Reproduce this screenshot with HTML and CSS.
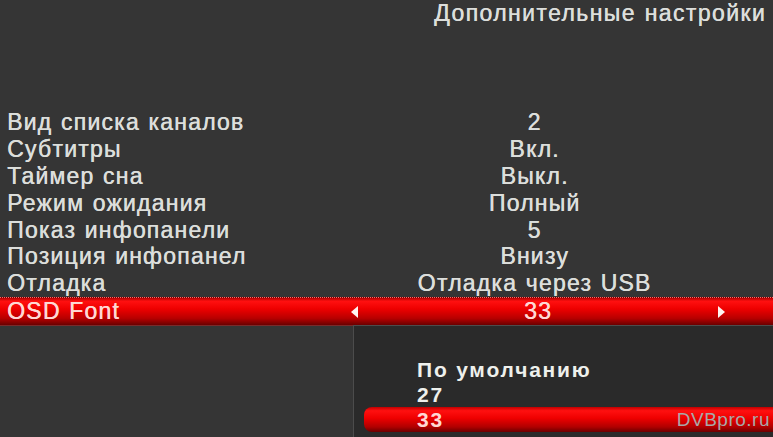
FILE: index.html
```html
<!DOCTYPE html>
<html lang="ru">
<head>
<meta charset="utf-8">
<title>Дополнительные настройки</title>
<link rel="stylesheet" href="styles.css">
</head>
<body>
<div class="screen">
  <header class="title">Дополнительные настройки</header>
  <div class="list">
    <div class="row"><span class="label">Вид списка каналов</span><span class="value">2</span></div>
    <div class="row"><span class="label">Субтитры</span><span class="value">Вкл.</span></div>
    <div class="row"><span class="label">Таймер сна</span><span class="value">Выкл.</span></div>
    <div class="row"><span class="label">Режим ожидания</span><span class="value">Полный</span></div>
    <div class="row"><span class="label">Показ инфопанели</span><span class="value">5</span></div>
    <div class="row"><span class="label">Позиция инфопанел</span><span class="value">Внизу</span></div>
    <div class="row"><span class="label">Отладка</span><span class="value">Отладка через USB</span></div>
    <div class="row selected"><span class="label">OSD Font</span><span class="value"><span class="arrow left"></span><span class="val-text">33</span><span class="arrow right"></span></span></div>
  </div>
  <div class="popup">
    <div class="opt">По умолчанию</div>
    <div class="opt">27</div>
    <div class="opt active">33</div>
  </div>
  <div class="watermark">DVBpro.ru</div>
</div>
</body>
</html>
```
FILE: styles.css
```css
html, body {
  margin: 0;
  padding: 0;
  background: #353535;
}
.screen {
  position: relative;
  width: 773px;
  height: 437px;
  overflow: hidden;
  background: #353535;
  font-family: "Liberation Sans", Arial, sans-serif;
  color: #dcdedb;
}
.title {
  text-align: right;
  padding: 0 7px 0 0;
  height: 109px;
  box-sizing: border-box;
  font-size: 23px;
  line-height: 26px;
  letter-spacing: 1.4px;
  word-spacing: 1px;
  text-shadow: 0.4px 0 0 currentColor;
}
.list {
  display: flex;
  flex-direction: column;
}
.row {
  display: grid;
  grid-template-columns: 296px 1fr;
  height: 26.9px;
  line-height: 27px;
  font-size: 23px;
  letter-spacing: 1.2px;
  word-spacing: 1px;
  text-shadow: 0.5px 0 0 currentColor;
}
.label {
  padding-left: 7px;
  white-space: nowrap;
}
.value {
  text-align: center;
  white-space: nowrap;
}
.row.selected {
  background: linear-gradient(to bottom, #b40000 0%, #ff1010 12%, #ee0000 40%, #b80000 75%, #6a0000 100%);
  border-top: 1px dotted #ff6a6a;
  border-bottom: 1px solid #7a2a2a;
  color: #ffd8d4;
}
.row.selected .value {
  display: flex;
  align-items: center;
  padding: 0 48px 0 55px;
}
.val-text {
  flex: 1;
  text-align: center;
}
.arrow {
  width: 0;
  height: 0;
  border-top: 6px solid transparent;
  border-bottom: 6px solid transparent;
}
.arrow.left {
  border-right: 7px solid #fff4f0;
}
.arrow.right {
  border-left: 7px solid #fff4f0;
}
.popup {
  position: absolute;
  left: 353px;
  top: 325px;
  right: 0;
  bottom: 0;
  background: #2a2a2a;
  border-left: 1px solid #4c4c4c;
  border-top: 1px solid #4c4c4c;
  padding-top: 31px;
  box-sizing: border-box;
  display: flex;
  flex-direction: column;
}
.opt {
  height: 25px;
  line-height: 25px;
  padding-left: 63px;
  font-size: 21px;
  font-weight: bold;
  color: #eef0ec;
  letter-spacing: 1.8px;
}
.opt.active {
  margin-left: 10px;
  padding-left: 53px;
  border-radius: 8px 0 0 8px;
  background: linear-gradient(to bottom, #c00000 0%, #ff1010 15%, #ee0000 45%, #b00000 80%, #6a0000 100%);
  color: #ffd8d4;
}
.watermark {
  position: absolute;
  right: 3px;
  bottom: 6px;
  font-size: 19px;
  color: #a8a8a8;
  letter-spacing: 0.5px;
}
```
